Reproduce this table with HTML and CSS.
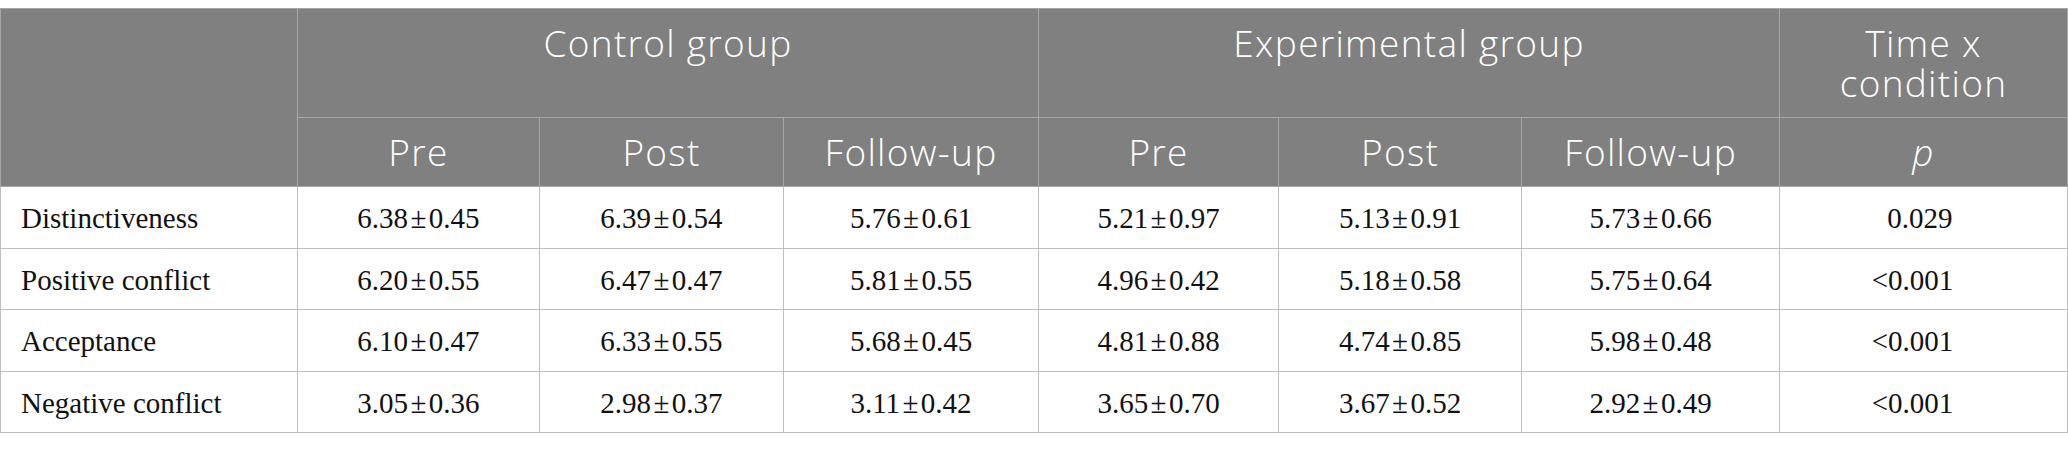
FILE: index.html
```html
<!DOCTYPE html>
<html>
<head>
<meta charset="utf-8">
<link rel="stylesheet" href="styles.css">
</head>
<body>
<table class="tbl">
  <colgroup>
    <col class="c-label">
    <col class="c1"><col class="c2"><col class="c3">
    <col class="c4"><col class="c5"><col class="c6">
    <col class="c7">
  </colgroup>
  <thead>
    <tr>
      <th rowspan="2"></th>
      <th colspan="3">Control group</th>
      <th colspan="3">Experimental group</th>
      <th>Time x<br>condition</th>
    </tr>
    <tr>
      <th>Pre</th><th>Post</th><th>Follow-up</th>
      <th>Pre</th><th>Post</th><th>Follow-up</th>
      <th><i>p</i></th>
    </tr>
  </thead>
  <tbody>
    <tr>
      <td class="label">Distinctiveness</td>
      <td>6.38&#8202;±&#8202;0.45</td><td>6.39&#8202;±&#8202;0.54</td><td>5.76&#8202;±&#8202;0.61</td>
      <td>5.21&#8202;±&#8202;0.97</td><td>5.13&#8202;±&#8202;0.91</td><td>5.73&#8202;±&#8202;0.66</td>
      <td class="pv"><span>0.029</span></td>
    </tr>
    <tr>
      <td class="label">Positive conflict</td>
      <td>6.20&#8202;±&#8202;0.55</td><td>6.47&#8202;±&#8202;0.47</td><td>5.81&#8202;±&#8202;0.55</td>
      <td>4.96&#8202;±&#8202;0.42</td><td>5.18&#8202;±&#8202;0.58</td><td>5.75&#8202;±&#8202;0.64</td>
      <td class="pv"><span>&lt;0.001</span></td>
    </tr>
    <tr>
      <td class="label">Acceptance</td>
      <td>6.10&#8202;±&#8202;0.47</td><td>6.33&#8202;±&#8202;0.55</td><td>5.68&#8202;±&#8202;0.45</td>
      <td>4.81&#8202;±&#8202;0.88</td><td>4.74&#8202;±&#8202;0.85</td><td>5.98&#8202;±&#8202;0.48</td>
      <td class="pv"><span>&lt;0.001</span></td>
    </tr>
    <tr>
      <td class="label">Negative conflict</td>
      <td>3.05&#8202;±&#8202;0.36</td><td>2.98&#8202;±&#8202;0.37</td><td>3.11&#8202;±&#8202;0.42</td>
      <td>3.65&#8202;±&#8202;0.70</td><td>3.67&#8202;±&#8202;0.52</td><td>2.92&#8202;±&#8202;0.49</td>
      <td class="pv"><span>&lt;0.001</span></td>
    </tr>
  </tbody>
</table>
</body>
</html>
```
FILE: styles.css
```css
html, body {
  margin: 0;
  padding: 0;
  background: #ffffff;
}
body {
  padding-top: 8px;
}
.tbl {
  border-collapse: collapse;
  table-layout: fixed;
  width: 2067px;
  border: 1px solid #bfbfbf;
}
.c-label { width: 297px; }
.c1 { width: 242px; }
.c2 { width: 244px; }
.c3 { width: 255px; }
.c4 { width: 240px; }
.c5 { width: 243px; }
.c6 { width: 258px; }
.c7 { width: 288px; }

.tbl th {
  background: #808080;
  color: #ffffff;
  font-family: "Open Sans", "Noto Sans", sans-serif;
  font-weight: 350;
  font-size: 37px;
  line-height: 40px;
  letter-spacing: 1.3px;
  text-align: center;
  vertical-align: top;
  padding: 14px 8px 14px 8px;
  border: 1px solid #a6a6a6;
}
.tbl th i {
  font-style: italic;
}
.tbl td {
  font-family: "Liberation Serif", "Times New Roman", serif;
  font-size: 29px;
  line-height: 34.5px;
  color: #111111;
  text-align: center;
  vertical-align: top;
  padding: 14px 8px 12px 8px;
  border: 1px solid #bfbfbf;
  white-space: nowrap;
}
.tbl td.label {
  text-align: left;
  padding-left: 20px;
}
.tbl td.pv {
  padding-right: 30px;
}
.tbl td.pv span {
  display: inline-block;
  min-width: 80px;
  text-align: right;
}
```
